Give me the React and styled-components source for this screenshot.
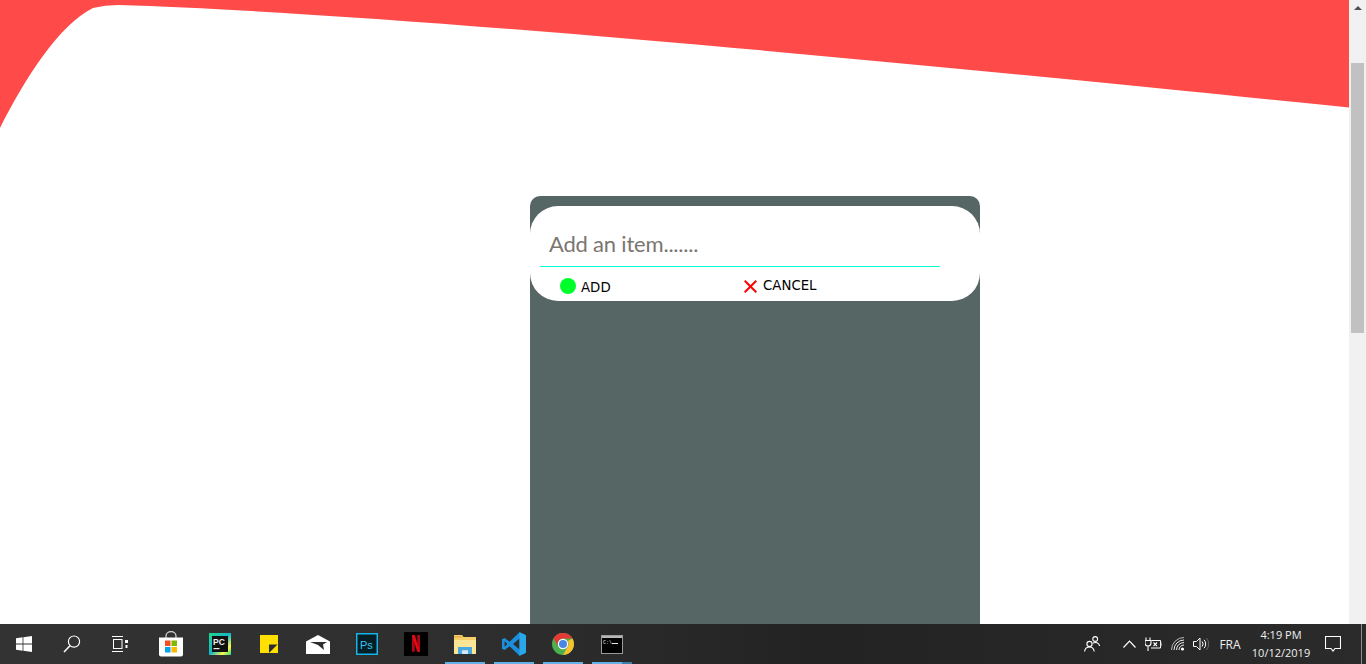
import React from "react";
import styled, { createGlobalStyle } from "styled-components";

const GlobalStyle = createGlobalStyle`
  html, body {
    margin: 0;
    height: 100%;
    overflow: hidden;
    background: #fff;
  }
  #root {
    height: 100%;
  }
`;

const Screen = styled.div`
  height: 664px;
  display: flex;
  flex-direction: column;
`;

const Viewport = styled.div`
  height: 624px;
  display: flex;
`;

const Page = styled.div`
  flex: 1;
  display: flex;
  flex-direction: column;
  overflow: hidden;
`;

const Wave = styled.svg`
  display: block;
  flex: none;
  width: 1349px;
  height: 130px;
`;

const Panel = styled.section`
  flex: 1;
  width: 450px;
  margin: 66px 0 0 530px;
  padding-top: 10px;
  box-sizing: border-box;
  background: #566664;
  border-radius: 10px 10px 0 0;
`;

const Card = styled.form`
  height: 95px;
  padding: 0 10px;
  box-sizing: border-box;
  background: #fff;
  border-radius: 28px;
`;

const ItemInput = styled.input`
  display: block;
  width: 400px;
  height: 61px;
  padding: 14px 9px 0;
  box-sizing: border-box;
  border: 0;
  border-bottom: 1px solid #00ffd5;
  outline: none;
  background: transparent;
  font-family: "Lato", sans-serif;
  font-size: 22px;
  letter-spacing: -0.2px;
  color: #333;

  &::placeholder {
    color: #7b7570;
    opacity: 1;
  }
`;

const Actions = styled.div`
  display: flex;
  align-items: flex-start;
  padding: 11px 0 0 20px;
`;

const ActionButton = styled.button`
  display: flex;
  align-items: center;
  height: 16px;
  padding: 0;
  border: 0;
  background: none;
  font-family: "DejaVu Sans", sans-serif;
  font-size: 13.33px;
  line-height: 16px;
  color: #000;
  gap: ${(props) => props.$gap}px;
  width: ${(props) => props.$width}px;
`;

const GreenDot = styled.span`
  flex: none;
  width: 16px;
  height: 16px;
  border-radius: 50%;
  background: #00ff2a;
`;

const ButtonLabel = styled.span`
  position: relative;
  top: ${(props) => props.$shift}px;
`;

const Scrollbar = styled.div`
  flex: none;
  width: 17px;
  display: flex;
  flex-direction: column;
  align-items: center;
  background: #f1f1f1;
`;

const ScrollArrow = styled.div`
  flex: none;
  width: 0;
  height: 0;
  margin-top: 6px;
  border-left: 4px solid transparent;
  border-right: 4px solid transparent;
  border-bottom: 4px solid #505050;
`;

const ScrollThumb = styled.div`
  flex: none;
  width: 13px;
  height: 270px;
  margin-top: 53px;
  background: #c1c1c1;
`;

const Taskbar = styled.footer`
  flex: none;
  height: 40px;
  display: flex;
  justify-content: space-between;
  background: linear-gradient(90deg, #333333 0%, #2e2e2e 35%, #232323 60%, #2b2b2b 100%);
`;

const TaskGroup = styled.div`
  display: flex;
`;

const SystemButton = styled.div`
  width: 48px;
  display: flex;
  align-items: center;
  justify-content: center;
`;

const Pinned = styled.div`
  display: flex;
  gap: 9px;
  margin-left: 7px;
`;

const PinnedApp = styled.div`
  position: relative;
  width: 40px;
  display: flex;
  align-items: center;
  justify-content: center;
`;

const RunningMark = styled.span`
  position: absolute;
  left: 0;
  right: 0;
  bottom: 0;
  height: 2px;
  background: #63b1e5;
`;

const StackedMark = styled.span`
  position: absolute;
  right: 0;
  bottom: 0;
  width: 10px;
  height: 2px;
  background: #3f7ea8;
`;

const Tray = styled.div`
  display: flex;
  align-items: stretch;
  color: #f0f0f0;
  font-family: "Open Sans", "Noto Sans", sans-serif;
  font-size: 12px;
`;

const TrayCell = styled.div`
  flex: none;
  width: ${(props) => props.$width}px;
  margin-left: ${(props) => props.$left || 0}px;
  display: flex;
  align-items: center;
  justify-content: center;
`;

const Clock = styled.div`
  flex: none;
  width: 66px;
  display: flex;
  flex-direction: column;
  align-items: center;
  justify-content: center;
  gap: 2px;
  font-size: 11px;
  line-height: 16px;
  white-space: nowrap;
`;

const ShowDesktop = styled.div`
  flex: none;
  width: 1px;
  margin: 0 4px 0 9px;
  background: #8a8a8a;
`;

const WindowsIcon = () => (
  <svg width="16" height="16" viewBox="0 0 16 16" fill="#fff">
    <path d="M0 2.3 6.6 1.3V7.6H0zM7.4 1.2 16 0V7.6H7.4zM0 8.4H6.6V14.7L0 13.7zM7.4 8.4H16V16L7.4 14.8z" />
  </svg>
);

const SearchIcon = () => (
  <svg width="18" height="18" viewBox="0 0 18 18" fill="none" stroke="#fff">
    <circle cx="11" cy="6.6" r="5.6" strokeWidth="1.2" />
    <path d="M7 10.8 1 17" strokeWidth="1.5" />
  </svg>
);

const TaskViewIcon = () => (
  <svg width="16" height="16" viewBox="0 0 16 16" fill="none" stroke="#fff" strokeWidth="1">
    <path d="M0 .5H11M0 15.5H11" />
    <rect x="1.5" y="3.5" width="8.5" height="9" />
    <rect x="13" y="4" width="3" height="3" fill="#fff" stroke="none" />
    <path d="M14.5 9V12" strokeWidth="2" />
  </svg>
);

const StoreIcon = () => (
  <svg width="24" height="26" viewBox="0 0 24 26">
    <path d="M7 7V5a5 4.4 0 0 1 10 0v2" fill="none" stroke="#d8d8d8" strokeWidth="1.2" />
    <path d="M0 6.5H24V23.5a2 2 0 0 1-2 2H2a2 2 0 0 1-2-2z" fill="#fff" />
    <rect x="6" y="9.5" width="5.5" height="5.5" fill="#f25022" />
    <rect x="12.5" y="9.5" width="5.5" height="5.5" fill="#7fba00" />
    <rect x="6" y="16" width="5.5" height="5.5" fill="#00a4ef" />
    <rect x="12.5" y="16" width="5.5" height="5.5" fill="#ffb900" />
  </svg>
);

const PyCharmIcon = () => (
  <svg width="22" height="22" viewBox="0 0 22 22">
    <defs>
      <linearGradient id="pcEdge" x1="0" y1="0" x2="1" y2="1">
        <stop offset="0" stopColor="#21d789" />
        <stop offset="0.5" stopColor="#16b5c8" />
        <stop offset="0.78" stopColor="#fcf84a" />
        <stop offset="1" stopColor="#21d789" />
      </linearGradient>
    </defs>
    <rect width="22" height="22" fill="url(#pcEdge)" />
    <rect x="3" y="3" width="16" height="16" fill="#111" />
    <text x="4" y="11.5" fontFamily="Liberation Sans, sans-serif" fontSize="8.5" fontWeight="700" fill="#eee">PC</text>
    <rect x="4.5" y="15" width="6" height="1.2" fill="#eee" />
  </svg>
);

const StickyIcon = () => (
  <svg width="18" height="18" viewBox="0 0 18 18">
    <rect width="18" height="18" fill="#ffe000" />
    <path d="M9 9.5H17.5L9 18z" fill="#2d2d2d" />
  </svg>
);

const MailIcon = () => (
  <svg width="24" height="19" viewBox="0 0 24 19">
    <path d="M0 6.5 12 0 24 6.5V19H0z" fill="#fff" />
    <path d="M4 7H21L17 9.5 18 15 12 10z" fill="#2d2d2d" />
  </svg>
);

const PhotoshopIcon = () => (
  <svg width="22" height="22" viewBox="0 0 22 22">
    <rect x="0.75" y="0.75" width="20.5" height="20.5" fill="#061e26" stroke="#16b4e8" strokeWidth="1.5" />
    <text x="4" y="15.5" fontFamily="Liberation Sans, sans-serif" fontSize="11" fill="#31c5f0">Ps</text>
  </svg>
);

const NetflixIcon = () => (
  <svg width="24" height="24" viewBox="0 0 24 24">
    <rect width="24" height="24" fill="#000" />
    <path d="M8 3H10.8V19.6L8 20z" fill="#b00710" />
    <path d="M13.2 3H16V20L13.2 19.6z" fill="#b00710" />
    <path d="M8 3H10.8L16 20 13.2 19.6z" fill="#e50914" />
  </svg>
);

const ExplorerIcon = () => (
  <svg width="22" height="20" viewBox="0 0 22 20">
    <path d="M0 1H8L9.5 3H22V19a1 1 0 0 1-1 1H1a1 1 0 0 1-1-1z" fill="#f6cf6b" />
    <path d="M0 3.6H8V2H0z" fill="#e2b24a" />
    <path d="M0 6H22V19a1 1 0 0 1-1 1H1a1 1 0 0 1-1-1z" fill="#fde596" />
    <path d="M4 13H18V20H14V16.5H8V20H4z" fill="#4aa8e0" />
    <rect x="8" y="16.5" width="6" height="3.5" fill="#cfe9f8" />
  </svg>
);

const VSCodeIcon = () => (
  <svg width="24" height="24" viewBox="0 0 24 24">
    <path d="M17.5 0.3 24 3.2V20.8L17.5 23.7 7.6 14.2 2.6 18 0 16.7V7.3L2.6 6 7.6 9.8zM17.5 6.6 11 12 17.5 17.4zM2.6 9.2V14.8L5.4 12z" fill="#1c8fdc" />
    <path d="M17.5 0.3 24 3.2V20.8L17.5 23.7z" fill="#2aa6ea" />
  </svg>
);

const ChromeIcon = () => (
  <svg width="22" height="22" viewBox="0 0 22 22">
    <circle cx="11" cy="11" r="11" fill="#4caf50" />
    <path d="M11 0A11 11 0 0 1 20.5 5.5H11A5.5 5.5 0 0 0 5.9 13L1.6 5.4A11 11 0 0 1 11 0z" fill="#e53935" />
    <path d="M20.5 5.5A11 11 0 0 1 11 22L15.7 13.8A5.5 5.5 0 0 0 15.8 8z" fill="#fbc02d" />
    <circle cx="11" cy="11" r="5.2" fill="#fff" />
    <circle cx="11" cy="11" r="4" fill="#4a86e8" />
  </svg>
);

const ConsoleIcon = () => (
  <svg width="22" height="19" viewBox="0 0 22 19">
    <rect x="0.5" y="0.5" width="21" height="18" fill="#000" stroke="#9a9a9a" />
    <rect x="1" y="1" width="20" height="2" fill="#b8b8b8" />
    <text x="2" y="8.5" fontFamily="Liberation Mono, monospace" fontSize="5" fill="#e8e8e8">C:\</text>
    <rect x="11" y="8" width="6" height="1" fill="#e8e8e8" />
  </svg>
);

const PeopleIcon = () => (
  <svg width="16" height="16" viewBox="0 0 16 16" fill="none" stroke="#fff" strokeWidth="1.1">
    <circle cx="5.5" cy="8" r="2.6" />
    <path d="M.6 15.5C.9 12.5 3 11 5.5 11s4.3 1.5 4.7 4.5" />
    <circle cx="11.2" cy="3" r="2.4" />
    <path d="M9 7.2C11.5 5.6 15 6.6 15.6 10" />
  </svg>
);

const ChevronIcon = () => (
  <svg width="13" height="8" viewBox="0 0 13 8" fill="none" stroke="#fff" strokeWidth="1.2">
    <path d="M.5 7.5 6.5 1.2 12.5 7.5" />
  </svg>
);

const BatteryIcon = () => (
  <svg width="17" height="14" viewBox="0 0 17 14" fill="none" stroke="#fff">
    <path d="M1 .5V3M5 .5V3M0 3.5H6V6A3 3 0 0 1 0 6zM3 8.5V14" strokeWidth="1.1" />
    <path d="M6.5 3.5H15.5V11H6" strokeWidth="1" />
    <path d="M8.5 5.5 12 9.2M12 5.5 8.5 9.2" strokeWidth="1.1" />
    <rect x="15.8" y="5.5" width="1.2" height="3.5" fill="#888" stroke="none" />
  </svg>
);

const WifiIcon = () => (
  <svg width="14" height="14" viewBox="0 0 14 14" fill="none">
    <path d="M.5 13A12.5 12.5 0 0 1 13 .5" stroke="#bbb" />
    <path d="M3 13A10 10 0 0 1 13 3" stroke="#eee" />
    <path d="M5.5 13A7.5 7.5 0 0 1 13 5.5" stroke="#eee" />
    <path d="M8 13A5 5 0 0 1 13 8" stroke="#eee" />
    <circle cx="11.5" cy="12" r="1.6" fill="#fff" />
  </svg>
);

const SoundIcon = () => (
  <svg width="16" height="14" viewBox="0 0 16 14" fill="none" stroke="#fff">
    <path d="M.5 4.5H3.5L7 1V13L3.5 9.5H.5z" strokeWidth="1" />
    <path d="M9 4.5A3.6 3.6 0 0 1 9 9.5" strokeWidth="1" />
    <path d="M11 2.8A6 6 0 0 1 11 11.2" strokeWidth="1" />
    <path d="M13.4 1A9 9 0 0 1 13.4 13" stroke="#666" strokeWidth="1" />
  </svg>
);

const NotificationIcon = () => (
  <svg width="16" height="16" viewBox="0 0 16 16" fill="none" stroke="#fff" strokeWidth="1.1">
    <path d="M.5.5H15.5V12.5H10L8 15 6 12.5H.5z" />
  </svg>
);

const pinnedApps = [
  { id: "store", icon: <StoreIcon /> },
  { id: "pycharm", icon: <PyCharmIcon /> },
  { id: "sticky", icon: <StickyIcon /> },
  { id: "mail", icon: <MailIcon /> },
  { id: "photoshop", icon: <PhotoshopIcon /> },
  { id: "netflix", icon: <NetflixIcon /> },
  { id: "explorer", icon: <ExplorerIcon />, running: true },
  { id: "vscode", icon: <VSCodeIcon />, running: true },
  { id: "chrome", icon: <ChromeIcon />, running: true },
  { id: "console", icon: <ConsoleIcon />, running: true, stacked: true },
];

export default function App() {
  return (
    <Screen>
      <GlobalStyle />
      <Viewport>
        <Page>
          <Wave viewBox="0 0 1349 130">
            <path
              d="M0 0H1349V107.5C1000 72 420 14 118 5Q105 5 93 8C60 24 25 78 0 128Z"
              fill="#ff4a4a"
            />
          </Wave>
          <Panel>
            <Card onSubmit={(e) => e.preventDefault()}>
              <ItemInput placeholder="Add an item......." />
              <Actions>
                <ActionButton type="button" $gap={5} $width={184}>
                  <GreenDot />
                  <ButtonLabel $shift={2}>ADD</ButtonLabel>
                </ActionButton>
                <ActionButton type="button" $gap={6} $width={90}>
                  <svg width="13" height="13" viewBox="0 0 13 13" fill="none" stroke="#ff0000" strokeWidth="2">
                    <path d="M.7.7 12.3 12.3M12.3.7.7 12.3" />
                  </svg>
                  <ButtonLabel $shift={0}>CANCEL</ButtonLabel>
                </ActionButton>
              </Actions>
            </Card>
          </Panel>
        </Page>
        <Scrollbar>
          <ScrollArrow />
          <ScrollThumb />
        </Scrollbar>
      </Viewport>
      <Taskbar>
        <TaskGroup>
          <SystemButton><WindowsIcon /></SystemButton>
          <SystemButton><SearchIcon /></SystemButton>
          <SystemButton><TaskViewIcon /></SystemButton>
          <Pinned>
            {pinnedApps.map((app) => (
              <PinnedApp key={app.id}>
                {app.icon}
                {app.running && <RunningMark />}
                {app.stacked && <StackedMark />}
              </PinnedApp>
            ))}
          </Pinned>
        </TaskGroup>
        <Tray>
          <TrayCell $width={40}><PeopleIcon /></TrayCell>
          <TrayCell $width={24} $left={5}><ChevronIcon /></TrayCell>
          <TrayCell $width={24}><BatteryIcon /></TrayCell>
          <TrayCell $width={25}><WifiIcon /></TrayCell>
          <TrayCell $width={22}><SoundIcon /></TrayCell>
          <TrayCell $width={36}>FRA</TrayCell>
          <Clock>
            <span>4:19 PM</span>
            <span>10/12/2019</span>
          </Clock>
          <TrayCell $width={38}><NotificationIcon /></TrayCell>
          <ShowDesktop />
        </Tray>
      </Taskbar>
    </Screen>
  );
}
